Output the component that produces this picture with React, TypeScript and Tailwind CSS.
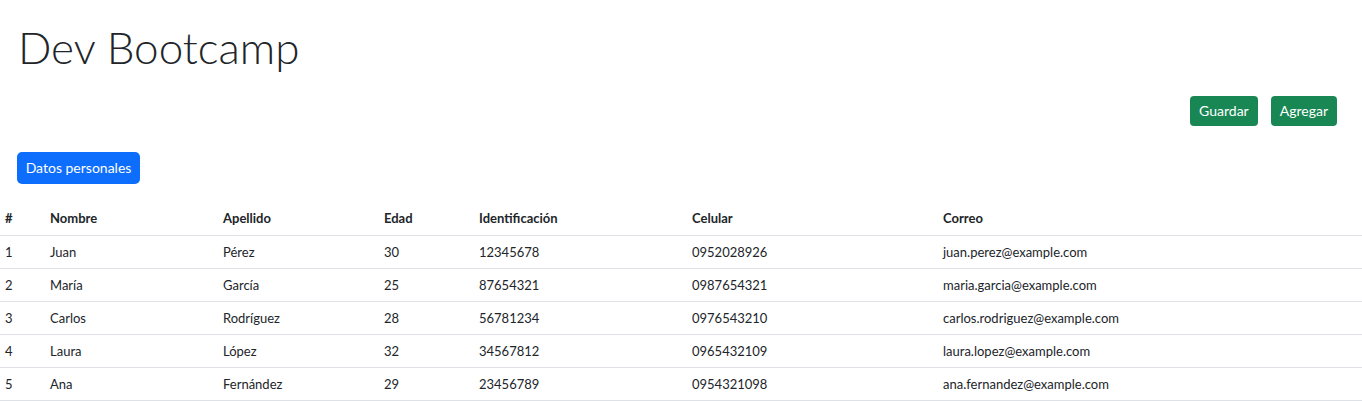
import React from 'react';

type Persona = {
  id: number;
  nombre: string;
  apellido: string;
  edad: number;
  identificacion: string;
  celular: string;
  correo: string;
};

const personas: Persona[] = [
  { id: 1, nombre: 'Juan', apellido: 'Pérez', edad: 30, identificacion: '12345678', celular: '0952028926', correo: 'juan.perez@example.com' },
  { id: 2, nombre: 'María', apellido: 'García', edad: 25, identificacion: '87654321', celular: '0987654321', correo: 'maria.garcia@example.com' },
  { id: 3, nombre: 'Carlos', apellido: 'Rodríguez', edad: 28, identificacion: '56781234', celular: '0976543210', correo: 'carlos.rodriguez@example.com' },
  { id: 4, nombre: 'Laura', apellido: 'López', edad: 32, identificacion: '34567812', celular: '0965432109', correo: 'laura.lopez@example.com' },
  { id: 5, nombre: 'Ana', apellido: 'Fernández', edad: 29, identificacion: '23456789', celular: '0954321098', correo: 'ana.fernandez@example.com' },
];

const App: React.FC = () => {
  return (
    <div className="min-h-screen bg-white text-[#212529] font-['Lato',sans-serif]">
      <div className="px-[18px] pt-[21px]">
        <h1 className="text-[44px] font-light leading-[1.2]">Dev Bootcamp</h1>
      </div>

      <div className="flex justify-end gap-[13px] pr-[25px] mt-[22px]">
        <button className="h-[30px] px-[9px] text-[14px] text-white bg-[#198754] rounded-[4px]">Guardar</button>
        <button className="h-[30px] px-[9px] text-[14px] text-white bg-[#198754] rounded-[4px]">Agregar</button>
      </div>

      <div className="px-[17px] mt-[26px]">
        <button className="h-[32px] w-[123px] text-[14px] text-white bg-[#0d6efd] rounded-[5px]">Datos personales</button>
      </div>

      <table className="mt-[19px] w-full table-fixed border-collapse text-[13px]">
        <colgroup>
          <col className="w-[45px]" />
          <col className="w-[173px]" />
          <col className="w-[161px]" />
          <col className="w-[95px]" />
          <col className="w-[213px]" />
          <col className="w-[251px]" />
          <col />
        </colgroup>
        <thead>
          <tr className="h-[33px] border-b border-[#dee2e6]">
            {['#', 'Nombre', 'Apellido', 'Edad', 'Identificación', 'Celular', 'Correo'].map((h) => (
              <th key={h} className="px-[5px] text-left font-bold">{h}</th>
            ))}
          </tr>
        </thead>
        <tbody>
          {personas.map((p) => (
            <tr key={p.id} className="h-[33px] border-b border-[#dee2e6]">
              <td className="px-[5px]">{p.id}</td>
              <td className="px-[5px]">{p.nombre}</td>
              <td className="px-[5px]">{p.apellido}</td>
              <td className="px-[5px]">{p.edad}</td>
              <td className="px-[5px]">{p.identificacion}</td>
              <td className="px-[5px]">{p.celular}</td>
              <td className="px-[5px]">{p.correo}</td>
            </tr>
          ))}
        </tbody>
      </table>
    </div>
  );
};

export default App;
